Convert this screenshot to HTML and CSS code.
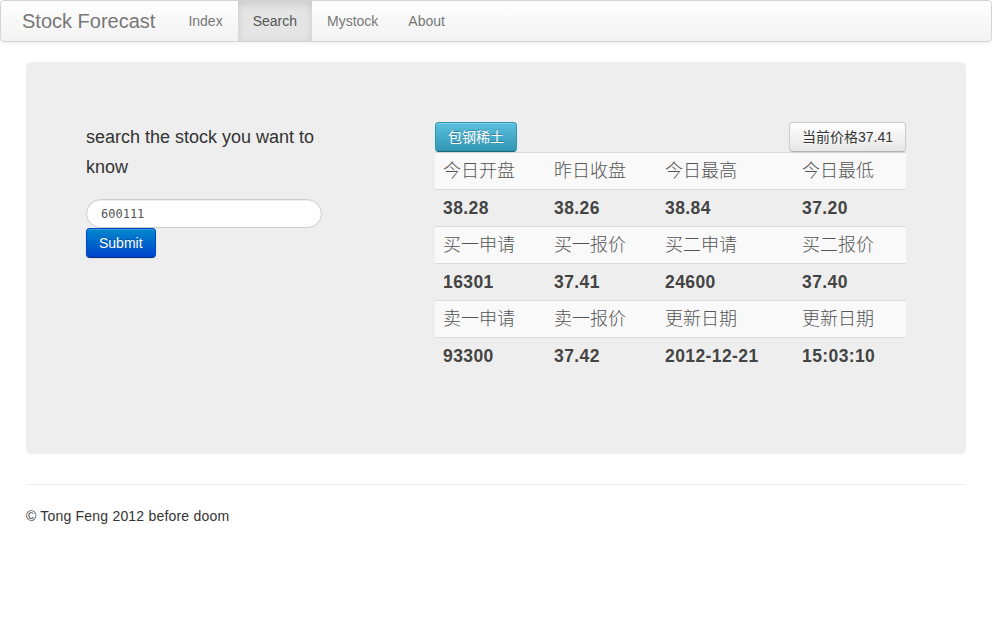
FILE: index.html
```html
<!DOCTYPE html>
<html lang="zh">
<head>
<meta charset="utf-8">
<title>Stock Forecast</title>
<link rel="stylesheet" href="styles.css">
</head>
<body>
<div class="navbar">
  <a class="brand" href="#">Stock Forecast</a>
  <ul class="nav">
    <li><a href="#">Index</a></li>
    <li class="active"><a href="#">Search</a></li>
    <li><a href="#">Mystock</a></li>
    <li><a href="#">About</a></li>
  </ul>
</div>
<div class="container">
  <div class="hero">
    <div class="hero-row">
      <div class="search-col">
        <p class="lead">search the stock you want to know</p>
        <form class="search-form">
          <input class="search-query" type="text" value="600111">
          <button class="btn btn-primary" type="button">Submit</button>
        </form>
      </div>
      <div class="quote-col">
        <div class="quote-head">
          <button class="btn btn-info" type="button">包钢稀土</button>
          <button class="btn" type="button">当前价格37.41</button>
        </div>
        <table class="quote-table">
          <colgroup>
            <col class="c1"><col class="c2"><col class="c3"><col class="c4">
          </colgroup>
          <tr class="label-row"><td>今日开盘</td><td>昨日收盘</td><td>今日最高</td><td>今日最低</td></tr>
          <tr class="value-row"><td>38.28</td><td>38.26</td><td>38.84</td><td>37.20</td></tr>
          <tr class="label-row"><td>买一申请</td><td>买一报价</td><td>买二申请</td><td>买二报价</td></tr>
          <tr class="value-row"><td>16301</td><td>37.41</td><td>24600</td><td>37.40</td></tr>
          <tr class="label-row"><td>卖一申请</td><td>卖一报价</td><td>更新日期</td><td>更新日期</td></tr>
          <tr class="value-row"><td>93300</td><td>37.42</td><td>2012-12-21</td><td>15:03:10</td></tr>
        </table>
      </div>
    </div>
  </div>
  <hr class="divider">
  <footer class="footer">
    <p>© Tong Feng 2012 before doom</p>
  </footer>
</div>
</body>
</html>
```

FILE: styles.css
```css
* { box-sizing: border-box; }
html, body { margin: 0; padding: 0; }
body {
  font-family: "Liberation Sans", Arial, "Noto Sans CJK SC", sans-serif;
  font-size: 14px;
  line-height: 20px;
  color: #333;
  background: #fff;
}
a { text-decoration: none; }

.navbar {
  display: flex;
  align-items: stretch;
  height: 42px;
  width: 992px;
  background: linear-gradient(to bottom, #ffffff, #f2f2f2);
  border: 1px solid #d4d4d4;
  border-radius: 4px;
  box-shadow: 0 1px 4px rgba(0,0,0,0.065);
  padding-left: 1px;
}
.brand {
  display: block;
  padding: 10px 18px 10px 20px;
  font-size: 20px;
  line-height: 20px;
  color: #777;
}
.nav {
  display: flex;
  list-style: none;
  margin: 0;
  padding: 0;
}
.nav li a {
  display: block;
  padding: 10px 15px;
  line-height: 20px;
  font-size: 14px;
  color: #777;
  height: 40px;
}
.nav li.active a {
  background: #e5e5e5;
  color: #555;
  box-shadow: inset 0 3px 8px rgba(0,0,0,0.125);
}

.container {
  width: 940px;
  margin: 20px auto 0;
}
.hero {
  background: #eee;
  border-radius: 6px;
  padding: 60px;
  margin-bottom: 30px;
}
.hero-row {
  display: flex;
  justify-content: space-between;
  align-items: flex-start;
}
.search-col { width: 262px; }
.lead {
  margin: 0 0 17px;
  font-size: 18px;
  line-height: 30px;
  color: #333;
}
.search-form { display: flex; flex-direction: column; align-items: flex-start; }
.search-query {
  width: 236px;
  height: 29px;
  margin: 0;
  padding: 4px 14px;
  border: 1px solid #ccc;
  border-radius: 15px;
  background: #fff;
  box-shadow: inset 0 1px 1px rgba(0,0,0,0.075);
  font-family: "DejaVu Sans Mono", "Liberation Mono", monospace;
  font-size: 12px;
  color: #555;
  outline: none;
}

.btn {
  display: inline-block;
  height: 30px;
  padding: 4px 12px;
  font-family: "Liberation Sans", Arial, "Noto Sans CJK SC", sans-serif;
  font-size: 14px;
  line-height: 20px;
  color: #333;
  text-shadow: 0 1px 1px rgba(255,255,255,0.75);
  background: linear-gradient(to bottom, #ffffff, #e6e6e6);
  border: 1px solid #ccc;
  border-bottom-color: #b3b3b3;
  border-radius: 4px;
  box-shadow: inset 0 1px 0 rgba(255,255,255,0.2), 0 1px 2px rgba(0,0,0,0.05);
  cursor: pointer;
}
.btn-primary {
  color: #fff;
  text-shadow: 0 -1px 0 rgba(0,0,0,0.25);
  background: linear-gradient(to bottom, #0088cc, #0044cc);
  border-color: #0044cc #0044cc #002a80;
}
.btn-info {
  color: #fff;
  text-shadow: 0 -1px 0 rgba(0,0,0,0.25);
  background: linear-gradient(to bottom, #5bc0de, #2f96b4);
  border-color: #2f96b4 #2f96b4 #1f6377;
}

.quote-col { width: 471px; }
.quote-head {
  display: flex;
  justify-content: space-between;
}
.quote-table {
  width: 471px;
  border-collapse: collapse;
  border-spacing: 0;
  table-layout: fixed;
  margin-bottom: 19px;
}
.quote-table col.c1 { width: 111px; }
.quote-table col.c2 { width: 111px; }
.quote-table col.c3 { width: 137px; }
.quote-table col.c4 { width: 112px; }
.quote-table td {
  padding: 8px;
  height: 37px;
  line-height: 20px;
  font-size: 18px;
  border-top: 1px solid #ddd;
  text-align: left;
  vertical-align: top;
  white-space: nowrap;
}
.label-row td {
  background: #f9f9f9;
  color: #555;
  font-family: "Noto Sans CJK SC", "Liberation Sans", sans-serif;
  font-weight: 300;
  padding-top: 6px;
  padding-bottom: 10px;
}
.value-row td {
  color: #444;
  font-weight: bold;
  font-size: 17.5px;
  letter-spacing: 0.4px;
}

.divider {
  margin: 0;
  border: 0;
  border-top: 1px solid #eee;
  border-bottom: 1px solid #fff;
}
.footer p {
  margin: 20px 0 0;
  font-size: 14px;
  line-height: 20px;
  letter-spacing: 0.2px;
  color: #333;
}
```
